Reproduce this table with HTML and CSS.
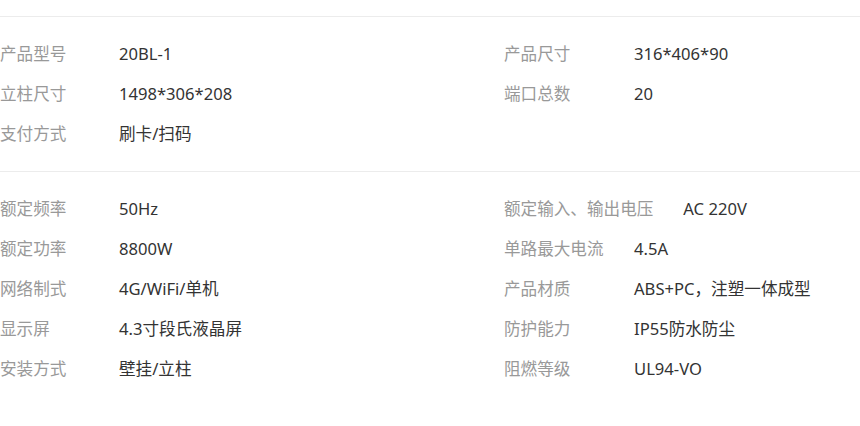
FILE: index.html
```html
<!DOCTYPE html>
<html lang="zh">
<head>
<meta charset="utf-8">
<link rel="stylesheet" href="styles.css">
</head>
<body>
<div class="page">
  <section class="group">
    <div class="item"><span class="label">产品型号</span><span class="value">20BL-1</span></div>
    <div class="item right"><span class="label">产品尺寸</span><span class="value">316*406*90</span></div>
    <div class="item"><span class="label">立柱尺寸</span><span class="value">1498*306*208</span></div>
    <div class="item right"><span class="label">端口总数</span><span class="value">20</span></div>
    <div class="item"><span class="label">支付方式</span><span class="value">刷卡/扫码</span></div>
  </section>
  <section class="group">
    <div class="item"><span class="label">额定频率</span><span class="value">50Hz</span></div>
    <div class="item right"><span class="label">额定输入、输出电压</span><span class="value">AC 220V</span></div>
    <div class="item"><span class="label">额定功率</span><span class="value">8800W</span></div>
    <div class="item right"><span class="label">单路最大电流</span><span class="value">4.5A</span></div>
    <div class="item"><span class="label">网络制式</span><span class="value">4G/WiFi/单机</span></div>
    <div class="item right"><span class="label">产品材质</span><span class="value">ABS+PC，注塑一体成型</span></div>
    <div class="item"><span class="label">显示屏</span><span class="value">4.3寸段氏液晶屏</span></div>
    <div class="item right"><span class="label">防护能力</span><span class="value">IP55防水防尘</span></div>
    <div class="item"><span class="label">安装方式</span><span class="value">壁挂/立柱</span></div>
    <div class="item right"><span class="label">阻燃等级</span><span class="value">UL94-VO</span></div>
  </section>
</div>
</body>
</html>
```

FILE: styles.css
```css
html, body {
  margin: 0;
  padding: 0;
  background: #fff;
}
body {
  font-family: "Noto Sans", "Noto Sans CJK SC", sans-serif;
  font-size: 16.6px;
  overflow: hidden;
}
.page {
  padding-top: 16px;
  width: 860px;
  overflow: hidden;
}
.group {
  display: grid;
  grid-template-columns: 504px 356px;
  padding: 17px 0 17px;
  border-top: 1px solid #ececec;
}
.item {
  display: flex;
  align-items: center;
  height: 40px;
  white-space: nowrap;
  line-height: 1;
}
.label {
  color: #999;
  min-width: 89px;
  margin-right: 30px;
}
.item.right .label {
  min-width: 100px;
}
.value {
  color: #333;
}
```
